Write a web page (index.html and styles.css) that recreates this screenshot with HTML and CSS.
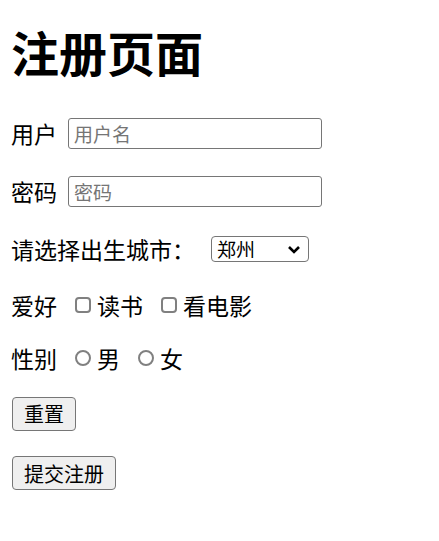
FILE: index.html
```html
<!DOCTYPE html>
<html lang="zh-CN">
<head>
    <meta charset="UTF-8">
    <meta name="viewport" content="width=device-width, initial-scale=1.0">
    <title>注册页面</title>
    <link rel="stylesheet" href="styles.css">
</head>
<body>
    <h1>注册页面</h1>

    <form class="reg-form" action="#" method="post">
        <div class="row">
            <label for="username">用户</label>
            <input type="text" id="username" name="username" class="text-input" placeholder="用户名">
        </div>

        <div class="row">
            <label for="password">密码</label>
            <input type="password" id="password" name="password" class="text-input" placeholder="密码">
        </div>

        <div class="row">
            <label for="city">请选择出生城市：</label>
            <select id="city" name="city" class="city-select">
                <option value="zz">郑州</option>
                <option value="bj">北京</option>
                <option value="sh">上海</option>
            </select>
        </div>

        <div class="row row-check">
            <span>爱好</span>
            <input type="checkbox" id="hobby-read" name="hobby" value="read" class="check">
            <label for="hobby-read" class="opt">读书</label>
            <input type="checkbox" id="hobby-movie" name="hobby" value="movie" class="check">
            <label for="hobby-movie" class="opt">看电影</label>
        </div>

        <div class="row row-check">
            <span>性别</span>
            <input type="radio" id="sex-m" name="sex" value="m" class="radio">
            <label for="sex-m" class="opt">男</label>
            <input type="radio" id="sex-f" name="sex" value="f" class="radio">
            <label for="sex-f" class="opt">女</label>
        </div>

        <div class="row row-btn">
            <button type="reset" class="btn">重置</button>
        </div>

        <div class="row row-btn row-last">
            <button type="submit" class="btn">提交注册</button>
        </div>
    </form>
</body>
</html>
```

FILE: styles.css
```css
* {
    box-sizing: border-box;
}

body {
    margin: 0;
    padding: 23px 11px 0;
    background: #fff;
    color: #000;
    font-family: "Noto Sans CJK SC", "Noto Sans", sans-serif;
}

h1 {
    margin: 0 0 34px;
    font-size: 48px;
    line-height: 56px;
    font-weight: 700;
}

.reg-form {
    display: flex;
    flex-direction: column;
    gap: 18px;
}

.row {
    display: flex;
    align-items: center;
    height: 40px;
    font-size: 23px;
}

.row-check {
    height: 35px;
}

.row-btn {
    height: 41px;
}

.row-last {
    height: 42px;
}

.text-input {
    width: 254px;
    height: 31px;
    margin: 0 0 0 11px;
    padding: 0 5px;
    border: 1px solid #767676;
    border-radius: 3px;
    font-family: inherit;
    font-size: 19px;
    color: #000;
}

.text-input::placeholder {
    color: #757575;
}

.city-select {
    appearance: none;
    -webkit-appearance: none;
    width: 98px;
    height: 26px;
    margin: 0 0 0 16px;
    padding: 0 0 0 5px;
    border: 1px solid #767676;
    border-radius: 4px;
    background-color: #fff;
    background-image: url("data:image/svg+xml,%3Csvg xmlns='http://www.w3.org/2000/svg' width='14' height='9' viewBox='0 0 14 9'%3E%3Cpath d='M2 2l5 5 5-5' fill='none' stroke='%23000' stroke-width='2.6'/%3E%3C/svg%3E");
    background-repeat: no-repeat;
    background-position: right 7px center;
    background-size: 14px 9px;
    font-family: inherit;
    font-size: 19px;
    line-height: 24px;
    color: #000;
}

.check,
.radio {
    appearance: none;
    -webkit-appearance: none;
    flex: 0 0 16px;
    width: 16px;
    min-width: 16px;
    height: 16px;
    margin: 0 0 0 18px;
    padding: 0;
    border: 2px solid #808080;
    background: #fff;
}

.check {
    border-radius: 4px;
}

.radio {
    border-radius: 50%;
}

.opt {
    margin-left: 6px;
}

.btn {
    height: 34px;
    margin: 0 0 0 1px;
    padding: 0 11px;
    border: 1px solid #767676;
    border-radius: 4px;
    background: #efefef;
    font-family: inherit;
    font-size: 20px;
    color: #000;
}
```
